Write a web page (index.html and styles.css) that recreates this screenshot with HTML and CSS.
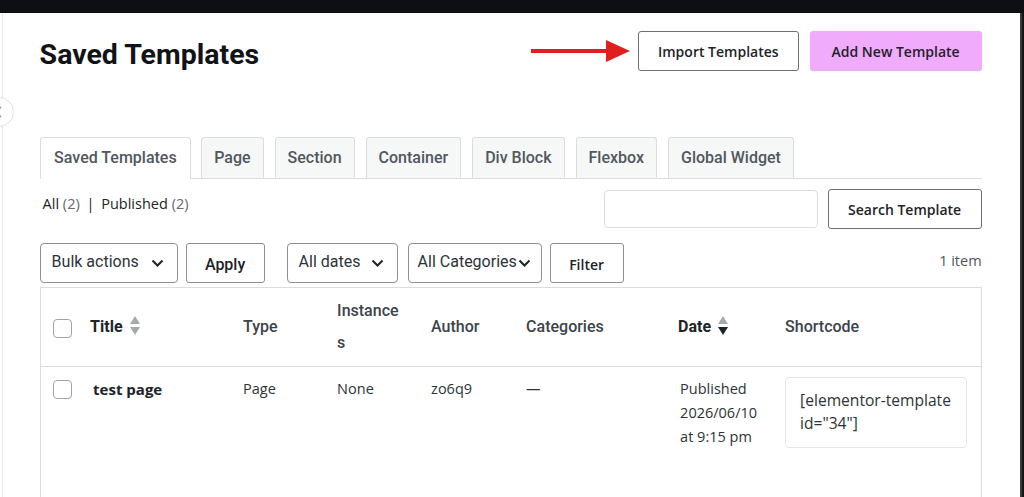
FILE: index.html
```html
<!DOCTYPE html>
<html lang="en">

<head>
    <meta charset="UTF-8">
    <meta name="viewport" content="width=device-width, initial-scale=1.0">
    <title>Saved Templates</title>
    <link rel="stylesheet" href="styles.css">
</head>

<body>
    <div class="topbar"></div>
    <div class="frame">
        <div class="rail">
            <span class="rail__toggle">
                <svg width="8" height="12" viewBox="0 0 8 12"><path d="M6 1 L1 6 L6 11" fill="none" stroke="#8c8f94" stroke-width="1.5"/></svg>
            </span>
        </div>

        <main class="wrap">
            <div class="page-head">
                <h1>Saved Templates</h1>
                <div class="page-head__actions">
                    <svg class="arrow" width="100" height="24" viewBox="0 0 100 24">
                        <line x1="0" y1="12" x2="78" y2="12" stroke="#e0201e" stroke-width="4"/>
                        <polygon points="75,1 99,12 75,23" fill="#e0201e"/>
                    </svg>
                    <button class="btn btn--outline">Import Templates</button>
                    <button class="btn btn--accent">Add New Template</button>
                </div>
            </div>

            <nav class="tabs">
                <a class="tab tab--active">Saved Templates</a>
                <a class="tab">Page</a>
                <a class="tab">Section</a>
                <a class="tab">Container</a>
                <a class="tab">Div Block</a>
                <a class="tab">Flexbox</a>
                <a class="tab">Global Widget</a>
            </nav>

            <div class="toolbar">
                <p class="views">All <span class="count">(2)</span> <span class="sep">|</span> Published <span class="count">(2)</span></p>
                <div class="search">
                    <input class="search__input" type="text">
                    <button class="btn btn--outline btn--search">Search Template</button>
                </div>
            </div>

            <div class="filters">
                <div class="select select--bulk">Bulk actions
                    <svg width="13" height="8" viewBox="0 0 13 8"><path d="M1.5 1.5 L6.5 6.5 L11.5 1.5" fill="none" stroke="#1d2327" stroke-width="2"/></svg>
                </div>
                <button class="btn btn--plain">Apply</button>
                <div class="select select--dates">All dates
                    <svg width="13" height="8" viewBox="0 0 13 8"><path d="M1.5 1.5 L6.5 6.5 L11.5 1.5" fill="none" stroke="#1d2327" stroke-width="2"/></svg>
                </div>
                <div class="select select--cats">All Categories
                    <svg width="13" height="8" viewBox="0 0 13 8"><path d="M1.5 1.5 L6.5 6.5 L11.5 1.5" fill="none" stroke="#1d2327" stroke-width="2"/></svg>
                </div>
                <button class="btn btn--outline btn--filter">Filter</button>
                <span class="items">1 item</span>
            </div>

            <table class="list">
                <thead>
                    <tr>
                        <th class="col-cb"><span class="checkbox"></span></th>
                        <th class="col-title sorted">Title
                            <svg class="sort" width="10" height="22" viewBox="0 0 10 22"><polygon points="5,1 10,9 0,9" fill="#a7aaad"/><polygon points="0,12 10,12 5,20" fill="#a7aaad"/></svg>
                        </th>
                        <th class="col-type">Type</th>
                        <th class="col-inst"><span class="wrap-word">Instances</span></th>
                        <th class="col-author">Author</th>
                        <th class="col-cats">Categories</th>
                        <th class="col-date sorted">Date
                            <svg class="sort" width="10" height="22" viewBox="0 0 10 22"><polygon points="5,1 10,9 0,9" fill="#a7aaad"/><polygon points="0,12 10,12 5,20" fill="#1d2327"/></svg>
                        </th>
                        <th class="col-code">Shortcode</th>
                    </tr>
                </thead>
                <tbody>
                    <tr>
                        <td><span class="checkbox"></span></td>
                        <td class="row-title">test page</td>
                        <td>Page</td>
                        <td>None</td>
                        <td>zo6q9</td>
                        <td>—</td>
                        <td>Published<br>2026/06/10<br>at 9:15 pm</td>
                        <td><div class="shortcode">[elementor-template id="34"]</div></td>
                    </tr>
                </tbody>
            </table>
        </main>

        <div class="edge"></div>
    </div>
</body>

</html>
```

FILE: styles.css
```css
* {
  margin: 0;
  padding: 0;
  box-sizing: border-box;
}

body {
  height: 100vh;
  overflow: hidden;
  background-color: #ffffff;
  font-family: 'Open Sans', 'Noto Sans', sans-serif;
  color: #1d2327;
}

.topbar {
  height: 13px;
  background-color: #0e0f12;
}

.frame {
  display: flex;
  height: calc(100vh - 13px);
}

.rail {
  position: relative;
  width: 3px;
  border-right: 1px solid #e6e6e6;
}

.rail__toggle {
  position: absolute;
  top: 84px;
  left: -16px;
  width: 30px;
  height: 30px;
  border: 1px solid #e2e2e2;
  border-radius: 50%;
  background-color: #ffffff;
  display: flex;
  align-items: center;
  justify-content: flex-end;
  padding-right: 10px;
}

.wrap {
  flex: 1;
  padding: 0 38px 0 37px;
}

.edge {
  width: 5px;
  border-left: 2px solid #3a3a3a;
  background-color: #141414;
}

/* header */
.page-head {
  display: flex;
  align-items: center;
  justify-content: space-between;
  margin-top: 18px;
  height: 40px;
}

.page-head h1 {
  font-family: 'Roboto', sans-serif;
  font-size: 28.5px;
  font-weight: 700;
  color: #111317;
  margin-top: 7px;
}

.page-head__actions {
  display: flex;
  align-items: center;
}

.arrow {
  margin-right: 7px;
}

.btn {
  font-family: 'Open Sans', 'Noto Sans', sans-serif;
  font-size: 14px;
  font-weight: 600;
  color: #1d2327;
  background-color: #ffffff;
  border-radius: 3px;
  cursor: pointer;
  height: 40px;
}

.btn--outline {
  border: 1px solid #6c7075;
  padding: 0 19px;
}

.btn--accent {
  border: none;
  background-color: #f0abfc;
  margin-left: 11px;
  padding: 0 20px;
  width: 172px;
}

/* tabs */
.tabs {
  display: flex;
  gap: 11px;
  margin-top: 66px;
  border-bottom: 1px solid #dcdcde;
  padding-left: 3px;
  height: 42px;
}

.tab {
  font-family: 'Roboto', sans-serif;
  font-size: 16px;
  font-weight: 500;
  color: #50575e;
  background-color: #f6f7f7;
  border: 1px solid #dcdcde;
  border-bottom: none;
  border-radius: 3px 3px 0 0;
  padding: 0 12px;
  height: 41px;
  line-height: 40px;
}

.tab--active {
  background-color: #ffffff;
  height: 42px;
  margin-left: -3px;
  margin-right: -1px;
  padding: 0 13.5px;
}

/* views + search */
.toolbar {
  display: flex;
  justify-content: space-between;
  margin-top: 10px;
  height: 40px;
}

.views {
  font-size: 14.5px;
  line-height: 24px;
  padding: 3px 0 0 3px;
  color: #1d2327;
}

.views .count {
  color: #646970;
}

.views .sep {
  color: #1d2327;
  margin: 0 3px;
}

.search {
  display: flex;
  align-items: center;
  gap: 10px;
}

.search__input {
  width: 214px;
  height: 38px;
  border: 1px solid #dcdcde;
  border-radius: 4px;
}

.btn--search {
  padding: 0 18px;
  width: 154px;
}

/* filters */
.filters {
  display: flex;
  align-items: center;
  margin-top: 14px;
  height: 40px;
}

.select {
  display: flex;
  align-items: center;
  justify-content: space-between;
  white-space: nowrap;
  font-family: 'Roboto', sans-serif;
  font-size: 16px;
  color: #2c3338;
  height: 40px;
  border: 1px solid #8c8f94;
  border-radius: 4px;
  padding: 0 13px 4px 11px;
}

.select svg {
  margin-top: 4px;
  flex-shrink: 0;
}

.select--bulk {
  width: 138px;
}

.select--dates {
  width: 111px;
  margin-left: 22px;
}

.select--cats {
  width: 134px;
  margin-left: 10px;
  padding-right: 10px;
  padding-left: 9px;
}

.btn--plain {
  font-family: 'Roboto', sans-serif;
  font-size: 16px;
  font-weight: 500;
  border: 1px solid #8c8f94;
  width: 79px;
  margin-left: 8px;
  padding-top: 3px;
}

.btn--filter {
  width: 74px;
  margin-left: 8px;
  padding: 2px 0 0;
  border-color: #8c8f94;
}

.items {
  margin-left: auto;
  font-size: 14.5px;
  color: #50575e;
  padding-bottom: 6px;
}

/* table */
.list {
  width: 100%;
  margin-top: 4px;
  border: 1px solid #dcdcde;
  border-collapse: collapse;
  table-layout: fixed;
}

.list th {
  font-family: 'Roboto', sans-serif;
  font-size: 16px;
  font-weight: 500;
  color: #3c434a;
  text-align: left;
  line-height: 32px;
  padding: 7px 10px;
  height: 78px;
  border-bottom: 1px solid #dcdcde;
  vertical-align: middle;
}

.list th.sorted {
  color: #1d2327;
  font-weight: 700;
}

.list .sort {
  vertical-align: middle;
  margin-left: 3px;
  margin-top: -4px;
}

.col-cb { width: 40px; }
.col-title { width: 153px; }
.col-type { width: 94px; }
.col-inst { width: 94px; }
.col-author { width: 95px; }
.col-cats { width: 152px; }
.col-date { width: 107px; }
.col-code { width: 206px; }

.list th.col-cb,
.list td:first-child {
  padding-left: 12px;
  padding-right: 0;
}

.wrap-word {
  display: block;
  width: 66px;
  word-break: break-all;
}

.list td {
  font-size: 14.5px;
  color: #2c3338;
  line-height: 24px;
  padding: 10px 10px 60px;
  vertical-align: top;
}

.list td.row-title {
  font-weight: 700;
  font-size: 15px;
  color: #1d2327;
  padding-left: 13px;
}

.list td:nth-child(7) {
  padding-left: 12px;
}

.checkbox {
  display: block;
  width: 19px;
  height: 19px;
  border: 1px solid #a0a4a8;
  border-radius: 4px;
  margin-top: 3px;
}

.shortcode {
  width: 182px;
  border: 1px solid #e6e6e6;
  border-radius: 4px;
  padding: 11px 12px 12px 14px;
  font-size: 15.6px;
  line-height: 23px;
  color: #2c3338;
}
```
